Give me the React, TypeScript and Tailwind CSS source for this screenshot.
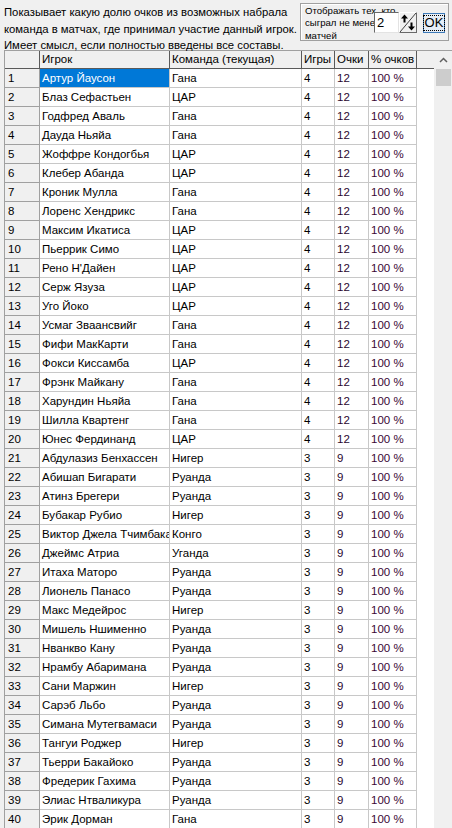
import React from "react";

type Row = { name: string; team: string; games: number; pts: number };

const rows: Row[] = [
  { name: "Артур Йаусон", team: "Гана", games: 4, pts: 12 },
  { name: "Блаз Сефастьен", team: "ЦАР", games: 4, pts: 12 },
  { name: "Годфред Аваль", team: "Гана", games: 4, pts: 12 },
  { name: "Дауда Ньяйа", team: "Гана", games: 4, pts: 12 },
  { name: "Жоффре Кондогбья", team: "ЦАР", games: 4, pts: 12 },
  { name: "Клебер Абанда", team: "ЦАР", games: 4, pts: 12 },
  { name: "Кроник Мулла", team: "Гана", games: 4, pts: 12 },
  { name: "Лоренс Хендрикс", team: "Гана", games: 4, pts: 12 },
  { name: "Максим Икатиса", team: "ЦАР", games: 4, pts: 12 },
  { name: "Пьеррик Симо", team: "ЦАР", games: 4, pts: 12 },
  { name: "Рено Н'Дайен", team: "ЦАР", games: 4, pts: 12 },
  { name: "Серж Язуза", team: "ЦАР", games: 4, pts: 12 },
  { name: "Уго Йоко", team: "ЦАР", games: 4, pts: 12 },
  { name: "Усмаг Зваансвийг", team: "Гана", games: 4, pts: 12 },
  { name: "Фифи МакКарти", team: "Гана", games: 4, pts: 12 },
  { name: "Фокси Киссамба", team: "ЦАР", games: 4, pts: 12 },
  { name: "Фрэнк Майкану", team: "Гана", games: 4, pts: 12 },
  { name: "Харундин Ньяйа", team: "Гана", games: 4, pts: 12 },
  { name: "Шилла Квартенг", team: "Гана", games: 4, pts: 12 },
  { name: "Юнес Фердинанд", team: "ЦАР", games: 4, pts: 12 },
  { name: "Абдулазиз Бенхассен", team: "Нигер", games: 3, pts: 9 },
  { name: "Абишап Бигарати", team: "Руанда", games: 3, pts: 9 },
  { name: "Атинз Брегери", team: "Руанда", games: 3, pts: 9 },
  { name: "Бубакар Рубио", team: "Нигер", games: 3, pts: 9 },
  { name: "Виктор Джела Тчимбакала", team: "Конго", games: 3, pts: 9 },
  { name: "Джеймс Атриа", team: "Уганда", games: 3, pts: 9 },
  { name: "Итаха Маторо", team: "Руанда", games: 3, pts: 9 },
  { name: "Лионель Панасо", team: "Руанда", games: 3, pts: 9 },
  { name: "Макс Медейрос", team: "Нигер", games: 3, pts: 9 },
  { name: "Мишель Ншименно", team: "Руанда", games: 3, pts: 9 },
  { name: "Нванкво Кану", team: "Руанда", games: 3, pts: 9 },
  { name: "Нрамбу Абаримана", team: "Руанда", games: 3, pts: 9 },
  { name: "Сани Маржин", team: "Нигер", games: 3, pts: 9 },
  { name: "Сарэб Льбо", team: "Руанда", games: 3, pts: 9 },
  { name: "Симана Мутегвамаси", team: "Руанда", games: 3, pts: 9 },
  { name: "Тангуи Роджер", team: "Нигер", games: 3, pts: 9 },
  { name: "Тьерри Бакайоко", team: "Руанда", games: 3, pts: 9 },
  { name: "Фредерик Гахима", team: "Руанда", games: 3, pts: 9 },
  { name: "Элиас Нтваликура", team: "Руанда", games: 3, pts: 9 },
  { name: "Эрик Дорман", team: "Гана", games: 3, pts: 9 },
];

const SpinArrows = () => (
  <svg width="16" height="19" viewBox="0 0 16 19">
    <line x1="0" y1="19" x2="16" y2="0" stroke="#404040" strokeWidth="1" />
    <path d="M4.5 1.5 L1 5.5 H3.5 V9.5 H5.5 V5.5 H8 Z" fill="#000" />
    <path d="M11.5 17.5 L15 13.5 H12.5 V9.5 H10.5 V13.5 H8 Z" fill="#000" />
  </svg>
);

export default function App() {
  return (
    <div className="w-[452px] h-[828px] overflow-hidden bg-[#f0f0f0] text-[11.5px] text-black font-['Liberation_Sans',Arial,sans-serif]">
      {/* top */}
      <div className="flex h-[50px]">
        <p className="w-[296px] shrink-0 pl-[4px] pt-[4px] text-[11.3px] leading-[16.7px] whitespace-nowrap">
          Показывает какую долю очков из возможных набрала
          <br />
          команда в матчах, где принимал участие данный игрок.
          <br />
          Имеет смысл, если полностью введены все составы.
        </p>
        <div className="ml-auto mt-[3px] mr-[3px] w-[149px] h-[38px] shrink-0 border border-[#a0a0a0] shadow-[inset_1px_1px_0_#fff] flex items-start">
          <div className="pl-[4px] pt-[1px] text-[9.6px] leading-[12.3px] w-[73px] shrink-0 whitespace-nowrap">
            Отображать тех, кто
            <br />
            сыграл не менее
            <br />
            матчей
          </div>
          <div className="mt-[8px] flex shrink-0">
            <div className="w-[25px] h-[21px] bg-white border-t border-l border-[#696969] border-b border-r border-b-[#e3e3e3] border-r-[#e3e3e3] text-[13px] leading-[19px] pl-[2px]">
              2
            </div>
            <div className="w-[18px] h-[21px] bg-[#f0f0f0] border border-[#696969] border-t-[#fff] border-l-[#fff] flex items-center justify-center">
              <SpinArrows />
            </div>
          </div>
          <div className="ml-[6px] mt-[9px] w-[22px] h-[20px] shrink-0 border border-[#3d7ab8] bg-[#e5edf6] flex items-center justify-center">
            <span className="border border-dotted border-black px-[1px] text-[13px] leading-[14px]">OK</span>
          </div>
        </div>
      </div>

      {/* grid */}
      <div className="flex ml-[4px] h-[778px] border-t border-l border-[#a0a0a0]">
        <div className="flex-1 bg-white overflow-hidden">
          <div className="flex h-[18px] bg-[#f0f0f0] border-b border-[#5a5a5a] leading-[17px] whitespace-nowrap">
            <div className="w-[35px] border-r border-[#5a5a5a]" />
            <div className="w-[130px] pl-[2px] border-r border-[#5a5a5a]">Игрок</div>
            <div className="w-[132px] pl-[2px] border-r border-[#5a5a5a]">Команда (текущая)</div>
            <div className="w-[33px] pl-[2px] border-r border-[#5a5a5a]">Игры</div>
            <div className="w-[34px] pl-[2px] border-r border-[#5a5a5a]">Очки</div>
            <div className="w-[48px] pl-[2px] border-r border-[#5a5a5a] overflow-hidden">% очков</div>
          </div>
          {rows.map((r, i) => (
            <div key={i} className="flex h-[19px] leading-[18px]">
              <div className="w-[35px] pl-[3px] bg-[#f0f0f0] border-r border-b border-[#a0a0a0]">{i + 1}</div>
              <div
                className={
                  i === 0
                    ? "w-[130px] pl-[2px] bg-[#0078d7] text-white border-r border-b border-[#c8c8c8] whitespace-nowrap overflow-hidden"
                    : "w-[130px] pl-[2px] border-r border-b border-[#c8c8c8] whitespace-nowrap overflow-hidden"
                }
              >
                {r.name}
              </div>
              <div className="w-[132px] pl-[2px] border-r border-b border-[#c8c8c8]">{r.team}</div>
              <div className="w-[33px] pl-[2px] border-r border-b border-[#c8c8c8]">{r.games}</div>
              <div className="w-[34px] pl-[2px] border-r border-b border-[#c8c8c8] text-[#2a0830]">{r.pts}</div>
              <div className="w-[48px] pl-[2px] border-r border-b border-[#c8c8c8] text-[#3a0835]">100 %</div>
            </div>
          ))}
        </div>
        {/* scrollbar */}
        <div className="w-[18px] bg-[#f0f0f0] flex flex-col items-center">
          <div className="h-[17px] flex items-center justify-center">
            <svg width="9" height="6" viewBox="0 0 9 6">
              <path d="M1 5 L4.5 1.5 L8 5" fill="none" stroke="#606060" strokeWidth="1.5" />
            </svg>
          </div>
          <div className="w-[15px] h-[17px] bg-[#cdcdcd] mt-[1px]" />
        </div>
      </div>
    </div>
  );
}
